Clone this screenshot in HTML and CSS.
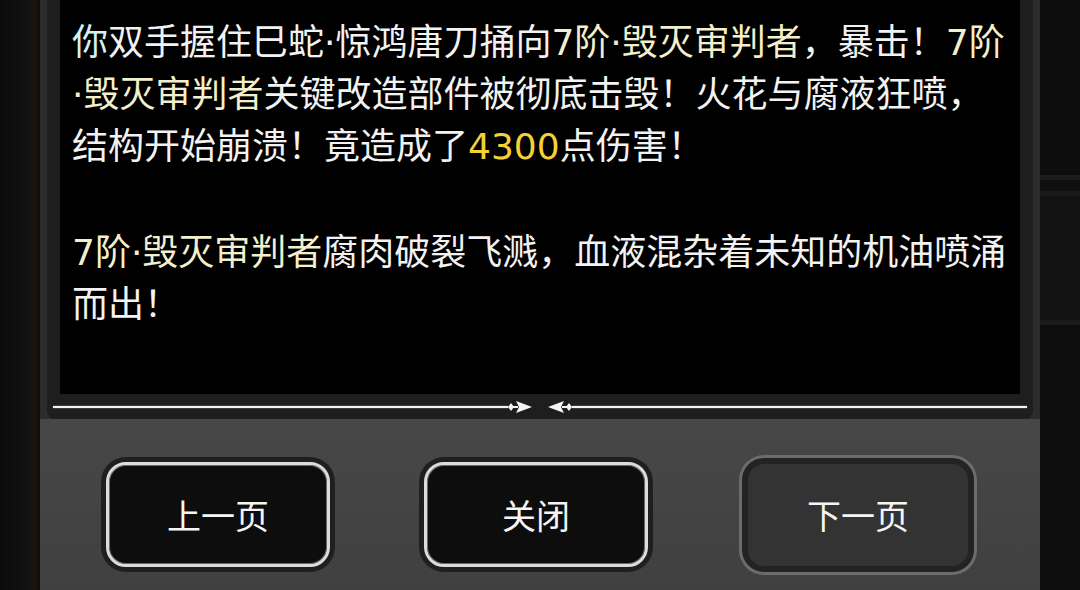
FILE: index.html
```html
<!DOCTYPE html>
<html lang="zh-CN">
<head>
    <meta charset="UTF-8">
    <meta name="viewport" content="width=device-width, initial-scale=1.0">
    <title>战斗记录</title>
    <link rel="stylesheet" href="styles.css">
</head>
<body>
    <div class="screen">
        <div class="side side-left"></div>

        <div class="panel">
            <div class="log-box">
                <div class="log">
                    <p><span class="you">你</span>双手握住巳蛇·惊鸿唐刀捅向<span class="foe">7阶·毁灭审判者</span>，暴击！<span class="foe">7阶·毁灭审判者</span>关键改造部件被彻底击毁！火花与腐液狂喷，结构开始崩溃！竟造成了<span class="dmg">4300</span>点伤害！</p>
                    <p><span class="foe">7阶·毁灭审判者</span>腐肉破裂飞溅，血液混杂着未知的机油喷涌而出！</p>
                </div>
                <div class="divider">
                    <span class="rule"></span>
                    <svg class="arrows" width="64" height="16" viewBox="0 0 64 16">
                        <g fill="#f4f4f4">
                            <path d="M0 8 L3 4 L6 8 L3 12 Z" />
                            <path d="M5 7 H10 V9 H5 Z" />
                            <path d="M8 2 L24 8 L8 14 L11 8 Z" />
                        </g>
                        <g fill="#f4f4f4" transform="translate(64 0) scale(-1 1)">
                            <path d="M0 8 L3 4 L6 8 L3 12 Z" />
                            <path d="M5 7 H10 V9 H5 Z" />
                            <path d="M8 2 L24 8 L8 14 L11 8 Z" />
                        </g>
                    </svg>
                    <span class="rule"></span>
                </div>
            </div>

            <div class="actions">
                <button class="btn">上一页</button>
                <button class="btn">关闭</button>
                <button class="btn btn-dim">下一页</button>
            </div>
        </div>

        <div class="side side-right"></div>
    </div>
</body>
</html>
```

FILE: styles.css
```css
body {
    margin: 0;
    padding: 0;
    background-color: #0c0c0c;
    font-family: "DejaVu Sans", "Noto Sans CJK SC", sans-serif;
    overflow: hidden;
}

.screen {
    display: flex;
    height: 590px;
}

.side {
    width: 40px;
    background-color: #0d0d0d;
}

.side-left {
    background: linear-gradient(90deg, #0b0b0b 0, #111 60%, #1a1410 88%, #0c0c0c 100%);
}

.side-right {
    background: linear-gradient(180deg,
        #0d0d0d 0, #0d0d0d 175px,
        #1c1c1c 175px, #1c1c1c 180px,
        #101010 180px, #101010 191px,
        #1a1a1a 191px, #1a1a1a 196px,
        #121212 196px, #121212 320px,
        #1b1b1b 320px, #1b1b1b 325px,
        #0e0e0e 325px);
}

.panel {
    width: 1000px;
    display: flex;
    flex-direction: column;
    background-color: #2c2c2c;
}

/* black log area with its dark frame */
.log-box {
    margin: 0 7px;
    padding: 0 13px;
    background-color: #1e1e1e;
    border-radius: 0 0 8px 8px;
}

.log {
    height: 394px;
    box-sizing: border-box;
    padding: 17px 10px 0 12px;
    background-color: #000;
    color: #f2f2f2;
    font-size: 36px;
    line-height: 52px;
}

.log p {
    margin: 0 0 54px;
}

.you {
    color: #d4f1f2;
}

.foe {
    color: #f3efcc;
}

.dmg {
    color: #f4d235;
}

.divider {
    height: 25px;
    margin: 0 -7px;
    display: flex;
    align-items: center;
}

.rule {
    flex: 1;
    height: 2px;
    background-color: #f2f2f2;
    box-shadow: 0 0 2px rgba(255, 255, 255, 0.45);
}

.arrows {
    display: block;
}

/* button row */
.actions {
    flex: 1;
    display: flex;
    justify-content: center;
    align-items: center;
    gap: 94px;
    padding-top: 20px;
    background: linear-gradient(180deg, #474747 0, #404040 100%);
}

.btn {
    width: 224px;
    height: 105px;
    box-sizing: border-box;
    border: 3px solid #dcdcdc;
    border-radius: 20px;
    background-color: #0d0d0d;
    box-shadow: 0 0 0 5px #1f1f1f, inset 0 0 0 1px #6a6a6a;
    color: #f5f5f5;
    font-family: "Noto Sans CJK SC", sans-serif;
    font-size: 34px;
    cursor: pointer;
}

.btn-dim {
    width: 232px;
    height: 114px;
    border: 6px solid #232323;
    border-radius: 22px;
    background-color: #333;
    box-shadow: 0 0 0 3px #6c6c6c;
}
```
